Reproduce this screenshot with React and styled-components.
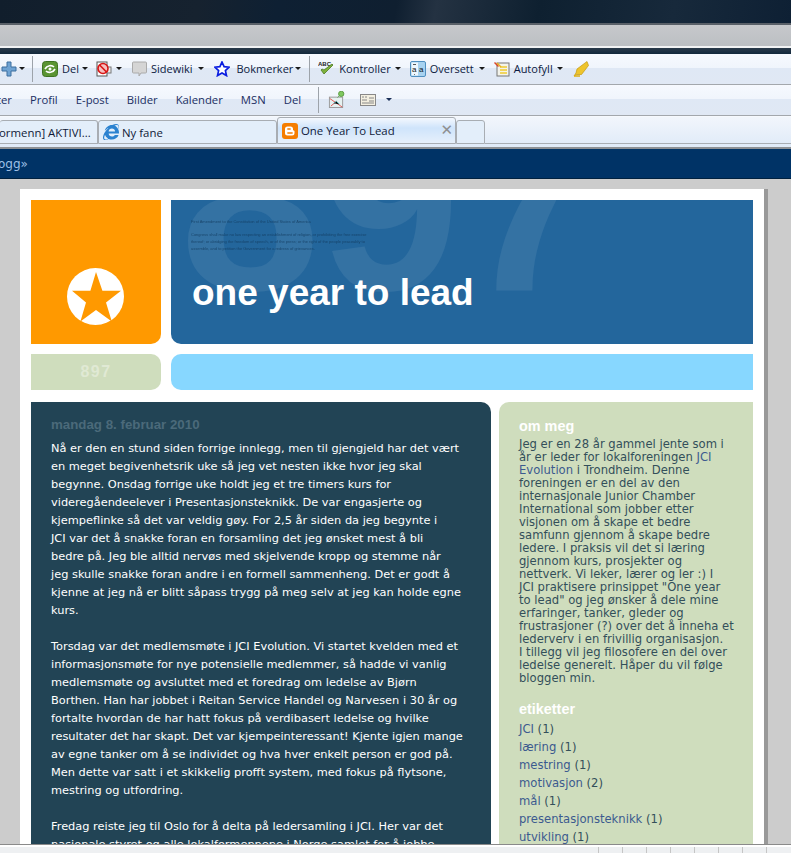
import React from 'react';
import styled, { createGlobalStyle } from 'styled-components';
import { FaInternetExplorer } from 'react-icons/fa';

const Global = createGlobalStyle`
  html, body { margin: 0; padding: 0; height: 853px; overflow: hidden; background: #ccc; }
  #root { height: 853px; overflow: hidden; }
`;
const Screen = styled.div`width: 791px; height: 853px; display: flex; flex-direction: column; overflow: hidden; position: relative; background: #ccc;`;
const Sky = styled.div`height: 23px; flex: none; background: linear-gradient(100deg, #111e2c 0%, #16222f 25%, #0e2033 35%, #0f1f30 50%, #243242 55%, #0e2030 68%, #17293b 85%, #0e2034 100%);`;
const AddressBand = styled.div`height: 21px; flex: none; border-top: 2px solid #596068; border-bottom: 2px solid #f2f3f4; background: linear-gradient(#c6c8cb, #bcbfc3);`;
const DarkGap = styled.div`height: 6px; flex: none; background: linear-gradient(#2a3a4a, #12283c);`;
const Toolbar = styled.div`
  height: ${p => p.$h}px; flex: none; box-sizing: border-box; display: flex; align-items: center; white-space: nowrap; padding-bottom: 1px;
  background: linear-gradient(#f6f9fe 0%, #f0f5fc 46%, #dfe8f5 47%, #e0e8f4 100%);
  border-bottom: 1px solid #a3a7ac;
  font: 12px "Open Sans", "Noto Sans", sans-serif; color: #10204a; overflow: hidden;
`;
const ToolLabel = styled.span`margin-left: ${p => p.$ml ?? 4}px; font-size: 11px; color: #0d1a3e;`;
const IconSlot = styled.svg`width: ${p => p.$w ?? 16}px; height: ${p => p.$w ?? 16}px; flex: none; margin-left: ${p => p.$ml ?? 0}px; display: block;`;
const Caret = styled.i`width: 0; height: 0; flex: none; border: 3px solid transparent; border-top: 3px solid ${p => p.$c ?? '#1a1a1a'}; border-bottom: 0; margin-left: ${p => p.$ml ?? 4}px; display: block;`;
const Divider = styled.i`width: 1px; height: ${p => p.$h ?? 26}px; flex: none; background: #9da3aa; margin-left: ${p => p.$ml}px; display: block;`;
const LinkLabel = styled.span`font-size: 11.3px; color: #1b2f63; margin-left: ${p => p.$ml ?? 18}px;`;

const TabStrip = styled.div`
  height: 33px; flex: none; box-sizing: border-box; display: flex; align-items: flex-end; position: relative;
  background: linear-gradient(#f2f6fc, #dfeaf8); border-top: 1px solid #f6f9fd; border-bottom: 2px solid #8d9094; padding-bottom: 3px;
  font: 12px "Open Sans", "Noto Sans", sans-serif; white-space: nowrap;
`;
const Tab = styled.div`
  width: ${p => p.$w}px; flex: none; height: ${p => p.$active ? 27 : 24}px; box-sizing: border-box; display: flex; align-items: center; overflow: hidden;
  border: 1px solid #a8adb3; border-radius: 3px 3px 0 0; border-left: ${p => p.$noLeft ? 0 : '1px solid #a8adb3'};
  background: ${p => p.$active ? 'linear-gradient(#f4f8fe, #cfe4fb 40%, #e6f0fb)' : '#e3eefa'}; color: #122044; font-size: 11.4px;
  padding-left: ${p => p.$pl ?? 0}px;
`;
const TabText = styled.span`margin-left: ${p => p.$ml ?? 3}px; flex: 1; min-width: 0; color: #101a38;`;
const TabFill = styled.div`flex: 1; height: 1px; background: #a8adb3;`;
const CloseMark = styled.span`font: bold 15px "DejaVu Sans", sans-serif; color: #8f8f8f; margin-right: 2px; line-height: 1;`;

const NavBar = styled.div`
  height: 30px; flex: none; box-sizing: border-box; background: #003366; border-bottom: 1px solid #00213f; display: flex; align-items: center;
  font: 13px "DejaVu Sans", sans-serif; color: #9dc0e6; overflow: hidden;
`;
const NavText = styled.span`margin-left: -13px; font-size: 12px;`;

const Backdrop = styled.div`flex: 1; min-height: 0; padding: 10px 23px 0 20px; display: flex; flex-direction: column;`;
const Sheet = styled.div`
  width: 744px; flex: 1; min-height: 0; box-sizing: border-box; background: #fff; padding: 11px 11px 0 11px; box-shadow: 4px 0 0 #999; overflow: hidden;
  display: grid; grid-template-columns: 130px 582px; grid-template-rows: 144px 36px; column-gap: 10px; row-gap: 10px; align-content: start;
`;
const LogoBox = styled.div`background: #ff9900; border-radius: 0 0 10px 0; display: flex; justify-content: center; align-items: flex-end; padding: 0 2px 19px 0;`;
const Banner = styled.div`background: #23669c; border-radius: 0 0 0 10px; position: relative; overflow: hidden; display: flex; flex-direction: column; padding: 18px 0 0 20px;`;
const GhostNumber = styled.div`position: absolute; left: 9px; top: -123px; font: bold 252px "Liberation Sans", Arial, sans-serif; line-height: 1; color: rgba(255,255,255,.08);`;
const FineLine = styled.div`position: relative; font: 4px/7px "Liberation Sans", Arial, sans-serif; color: #123a5c; opacity: .8; white-space: nowrap; margin-bottom: ${p => p.$mb ?? 0}px; filter: blur(.4px);`;
const SiteTitle = styled.h1`position: relative; margin: 19px 0 0 1px; font: bold 37px/44px "Liberation Sans", Arial, sans-serif; color: #fff; white-space: nowrap;`;
const GreenTab = styled.div`background: #cfddbd; border-radius: 0 10px 10px 0; display: flex; align-items: center; justify-content: center; font: bold 16px "Liberation Sans", Arial, sans-serif; letter-spacing: 1.5px; color: #e0e9d4;`;
const SkyBar = styled.div`background: #87d7ff; border-radius: 10px 0 0 10px;`;
const Columns = styled.div`grid-column: 1 / -1; display: grid; grid-template-columns: 460px 254px; column-gap: 8px; margin-top: 2px;`;
const PostPanel = styled.div`background: #224455; border-radius: 0 10px 0 0; padding: 15px 20px 0 20px; height: 460px; overflow: hidden; font: 11.37px/18px "DejaVu Sans", Verdana, sans-serif; color: #fff;`;
const PostDate = styled.div`font: bold 13.3px/16px "Liberation Sans", Arial, sans-serif; color: #4b6a7a; margin-bottom: 6px;`;
const PostLine = styled.div`white-space: nowrap; min-height: 18px;`;
const Aside = styled.div`background: #cfddbd; border-radius: 10px 0 0 0; padding: 15px 20px 0 20px; height: 460px; overflow: hidden; font: 11.6px/13px "DejaVu Sans", Verdana, sans-serif; color: #334f5a;`;
const AsideHeading = styled.h2`margin: 0 0 ${p => p.$mb ?? 0}px; font: bold 14.4px/18px "Liberation Sans", Arial, sans-serif; color: #fff;`;
const AsideLine = styled.div`white-space: nowrap;`;
const AsideSection = styled.div`margin-bottom: ${p => p.$mb ?? 0}px; margin-top: ${p => p.$mt ?? 0}px;`;
const Label = styled.div`line-height: 18px; white-space: nowrap;`;
const Anchor = styled.a`color: #3c5a8f; text-decoration: none;`;
const StatusBar = styled.div`position: absolute; left: 0; right: 0; bottom: 0; height: 8px; box-sizing: border-box; background: #eef0f2; border-top: 2px solid #fff; box-shadow: 0 -1px 0 #8a8a8a; display: flex; justify-content: flex-end; padding-right: 24px; gap: 23px;`;
const StatusCell = styled.i`width: 1px; background: #c5c5c5; display: block;`;

const PlusIcon = () => <IconSlot viewBox="0 0 16 16" $ml={1}><path d="M6 1h4v5h5v4h-5v5H6v-5H1V6h5z" fill="#6fa3d3" stroke="#3c6f9f" /></IconSlot>;
const ShareIcon = () => <IconSlot viewBox="0 0 16 16" $ml={9}><rect x=".5" y=".5" width="15" height="15" rx="3" fill="#5a9432" stroke="#3e7322" /><path d="M3 8c2-4 7-4 9-2M13 8c-2 4-7 4-9 2" fill="none" stroke="#fff" strokeWidth="1.7" /><circle cx="8" cy="8" r="1.5" fill="#fff" /></IconSlot>;
const BlockIcon = () => <IconSlot viewBox="0 0 16 16" $ml={8}><rect x="1" y="1" width="10" height="14" fill="#fff" stroke="#555" /><rect x="11" y="6" width="4" height="6" fill="#eee" stroke="#777" /><circle cx="7" cy="7.5" r="5" fill="#f5c0c0" stroke="#d81414" strokeWidth="1.6" /><path d="M3.6 4 10.5 11" stroke="#d81414" strokeWidth="1.6" /></IconSlot>;
const BubbleIcon = () => <IconSlot viewBox="0 0 16 16" $ml={10}><path d="M1.5 1h12a1 1 0 0 1 1 1v9a1 1 0 0 1-1 1H9l-2 3v-3H1.5a1 1 0 0 1-1-1V2a1 1 0 0 1 1-1z" fill="#d5d5d5" stroke="#aaa" /></IconSlot>;
const StarIcon = () => <IconSlot viewBox="0 0 16 16" $ml={10}><path d="M8 1l2.100 4.700 5.100.5-3.800 3.400 1.100 5L8 12l-4.500 2.600 1.100-5L.8 6.200l5.100-.5z" fill="#fff" stroke="#0b1ee0" strokeWidth="1.700" /></IconSlot>;
const AbcIcon = () => <IconSlot viewBox="0 0 17 17" $w={17} $ml={8}><text x="0" y="5.500" fontFamily="Liberation Sans" fontWeight="bold" fontSize="6" fill="#222">ABC</text><path d="M3 10l3 4 9-9-1-1-8 6-2-1z" fill="#7fb23c" stroke="#4c7a20" strokeWidth=".8" /></IconSlot>;
const TranslateIcon = () => <IconSlot viewBox="0 0 16 16" $ml={9}><rect x=".5" y=".5" width="15" height="15" rx="1.500" fill="#a7d2f0" stroke="#4f8fc0" /><rect x="1.500" y="1.500" width="6.500" height="13" fill="#eef7fd" /><text x="2" y="11" fontFamily="Liberation Sans" fontSize="8" fill="#111">a</text><text x="9" y="11" fontFamily="Liberation Sans" fontSize="8" fill="#111">a</text><path d="M3 3.500h3M4.500 13v.8" stroke="#111" strokeWidth=".7" /></IconSlot>;
const FormIcon = () => <IconSlot viewBox="0 0 16 16" $ml={9}><rect x="3" y="2" width="12" height="13" fill="#f3f3ea" stroke="#777" /><path d="M6 6h7M6 9h7M6 12h7" stroke="#f0cb30" strokeWidth="1.500" /><path d="M1 1l4 4-1 1-4-4z" fill="#d9442c" /><path d="M3 2l4 4" stroke="#e8b020" strokeWidth="1.500" /></IconSlot>;
const MarkerIcon = () => <IconSlot viewBox="0 0 16 16" $ml={10}><path d="M14 0.500l1.500 4-7 9H4L1 15l2-3 1-4z" fill="#eec42c" stroke="#c49a10" strokeWidth=".7" /><path d="M1 15h6" stroke="#e0b010" strokeWidth="1.500" /></IconSlot>;
const MapIcon = () => <IconSlot viewBox="0 0 16 18" $w={17} $ml={9}><rect x="0.500" y="6.500" width="14" height="11" fill="#e6f1f1" stroke="#999" /><path d="M1 8l13 9M2 16l6-5" stroke="#e05050" /><path d="M5 13l3-2 3 3" stroke="#4aa" /><path d="M9 7l3-3" stroke="#6a6" /><circle cx="13" cy="3" r="2.800" fill="#80c860" stroke="#5a9a40" /></IconSlot>;
const CardIcon = () => <IconSlot viewBox="0 0 16 12" $ml={15}><rect x=".5" y=".5" width="15" height="11" fill="#f3efe0" stroke="#888" /><path d="M2 3h2M5 3h2M2 6h5M9 4h5M9 7h5M2 9h12" stroke="#888" /></IconSlot>;
const BloggerIcon = () => <IconSlot viewBox="0 0 16 16"><rect width="16" height="16" rx="3" fill="#f57d00" /><path d="M5.500 3.500h3a2.500 2.500 0 0 1 2.500 2.500v.8c0 .4.300.7.700.7.400 0 .8.300.8.700V10a2.500 2.500 0 0 1-2.500 2.500h-4.500A2.500 2.500 0 0 1 3 10V6a2.500 2.500 0 0 1 2.500-2.500z" fill="#fff" /><path d="M5.800 6h2.400M5.800 10h4.400" stroke="#f57d00" strokeWidth="1.300" strokeLinecap="round" /></IconSlot>;
const ExplorerIcon = () => <FaInternetExplorer size={16} color="#2b82d0" style={{ flex: 'none' }} />;
const EmblemIcon = () => <svg width="57" height="57" viewBox="0 0 57 57"><circle cx="28.500" cy="28.500" r="28.500" fill="#fff" /><path d="M29 4l6.400 18.800H54L39 34.500l5.800 19L29 42 13.400 53.500 19 34.500 5 22.800h18.400z" fill="#ff9900" /></svg>;

const post = ['Nå er den en stund siden forrige innlegg, men til gjengjeld har det vært','en meget begivenhetsrik uke så jeg vet nesten ikke hvor jeg skal','begynne. Onsdag forrige uke holdt jeg et tre timers kurs for','videregåendeelever i Presentasjonsteknikk. De var engasjerte og','kjempeflinke så det var veldig gøy. For 2,5 år siden da jeg begynte i','JCI var det å snakke foran en forsamling det jeg ønsket mest å bli','bedre på. Jeg ble alltid nervøs med skjelvende kropp og stemme når','jeg skulle snakke foran andre i en formell sammenheng. Det er godt å','kjenne at jeg nå er blitt såpass trygg på meg selv at jeg kan holde egne','kurs.','','Torsdag var det medlemsmøte i JCI Evolution. Vi startet kvelden med et','informasjonsmøte for nye potensielle medlemmer, så hadde vi vanlig','medlemsmøte og avsluttet med et foredrag om ledelse av Bjørn','Borthen. Han har jobbet i Reitan Service Handel og Narvesen i 30 år og','fortalte hvordan de har hatt fokus på verdibasert ledelse og hvilke','resultater det har skapt. Det var kjempeinteressant! Kjente igjen mange','av egne tanker om å se individet og hva hver enkelt person er god på.','Men dette var satt i et skikkelig profft system, med fokus på flytsone,','mestring og utfordring.','','Fredag reiste jeg til Oslo for å delta på ledersamling i JCI. Her var det','nasjonale styret og alle lokalformennene i Norge samlet for å jobbe'];
const about = ['Jeg er en 28 år gammel jente som i',<>år er leder for lokalforeningen <Anchor>JCI</Anchor></>,<><Anchor>Evolution</Anchor> i Trondheim. Denne</>,'foreningen er en del av den','internasjonale Junior Chamber','International som jobber etter','visjonen om å skape et bedre','samfunn gjennom å skape bedre','ledere. I praksis vil det si læring','gjennom kurs, prosjekter og','nettverk. Vi leker, lærer og ler :) I','JCI praktisere prinsippet "One year','to lead" og jeg ønsker å dele mine','erfaringer, tanker, gleder og','frustrasjoner (?) over det å inneha et','lederverv i en frivillig organisasjon.','I tillegg vil jeg filosofere en del over','ledelse generelt. Håper du vil følge','bloggen min.'];
const labels = [['JCI',1],['læring',1],['mestring',1],['motivasjon',2],['mål',1],['presentasjonsteknikk',1],['utvikling',1]];

export default function App() {
  return (
    <Screen>
      <Global />
      <Sky />
      <AddressBand />
      <DarkGap />
      <Toolbar $h={31}>
        <PlusIcon /><Caret $ml={2} />
        <Divider $ml={7} />
        <ShareIcon /><ToolLabel>Del</ToolLabel><Caret $ml={3} />
        <BlockIcon /><Caret $ml={4} />
        <BubbleIcon /><ToolLabel $ml={3}>Sidewiki</ToolLabel><Caret $ml={5} />
        <StarIcon /><ToolLabel $ml={7}>Bokmerker</ToolLabel><Caret $ml={2} />
        <Divider $ml={8} />
        <AbcIcon /><ToolLabel>Kontroller</ToolLabel><Caret $ml={4} />
        <TranslateIcon /><ToolLabel>Oversett</ToolLabel><Caret $ml={5} />
        <FormIcon /><ToolLabel>Autofyll</ToolLabel><Caret $ml={4} />
        <MarkerIcon />
      </Toolbar>
      <Toolbar $h={31}>
        <LinkLabel $ml={-3}>ter</LinkLabel>
        <LinkLabel>Profil</LinkLabel>
        <LinkLabel>E-post</LinkLabel>
        <LinkLabel>Bilder</LinkLabel>
        <LinkLabel>Kalender</LinkLabel>
        <LinkLabel>MSN</LinkLabel>
        <LinkLabel>Del</LinkLabel>
        <Divider $ml={17} />
        <MapIcon />
        <CardIcon />
        <Caret $ml={10} $c="#1c3158" />
      </Toolbar>
      <TabStrip>
        <Tab $w={98} $noLeft><TabText $ml={-1}>ormenn] AKTIVI...</TabText></Tab>
        <Tab $w={179} $pl={4}><ExplorerIcon /><TabText>Ny fane</TabText></Tab>
        <Tab $w={179} $active $pl={4}><BloggerIcon /><TabText>One Year To Lead</TabText><CloseMark>✕</CloseMark></Tab>
        <Tab $w={29} />
        <TabFill />
      </TabStrip>
      <NavBar><NavText>blogg»</NavText></NavBar>
      <Backdrop>
        <Sheet>
          <LogoBox><EmblemIcon /></LogoBox>
          <Banner>
            <GhostNumber>897</GhostNumber>
            <FineLine $mb={6}>First Amendment to the Constitution of the United States of America</FineLine>
            <FineLine>Congress shall make no law respecting an establishment of religion, or prohibiting the free exercise</FineLine>
            <FineLine>thereof; or abridging the freedom of speech, or of the press; or the right of the people peaceably to</FineLine>
            <FineLine>assemble, and to petition the Government for a redress of grievances.</FineLine>
            <SiteTitle>one year to lead</SiteTitle>
          </Banner>
          <GreenTab>897</GreenTab>
          <SkyBar />
          <Columns>
            <PostPanel>
              <PostDate>mandag 8. februar 2010</PostDate>
              {post.map((l, i) => <PostLine key={i}>{l}</PostLine>)}
            </PostPanel>
            <Aside>
              <AsideHeading $mb={3}>om meg</AsideHeading>
              <AsideSection $mb={15}>
                {about.map((l, i) => <AsideLine key={i}>{l}</AsideLine>)}
              </AsideSection>
              <AsideHeading $mb={2}>etiketter</AsideHeading>
              <AsideSection>
                {labels.map(([n, c]) => <Label key={n}><Anchor>{n}</Anchor> ({c})</Label>)}
              </AsideSection>
            </Aside>
          </Columns>
        </Sheet>
      </Backdrop>
      <StatusBar>{Array.from({ length: 8 }, (_, i) => <StatusCell key={i} />)}</StatusBar>
    </Screen>
  );
}
